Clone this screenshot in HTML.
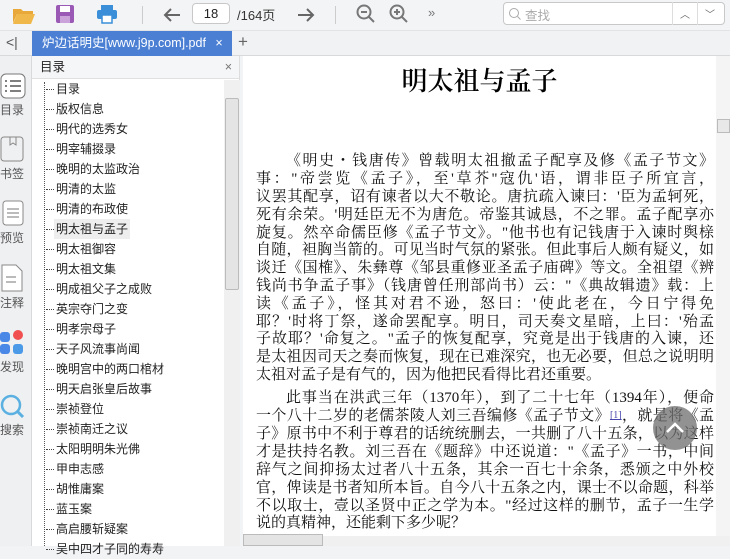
<!DOCTYPE html><html><head><meta charset="utf-8"><style>
*{margin:0;padding:0;box-sizing:border-box}
body{width:730px;height:546px;overflow:hidden;background:#f2f3f5;font-family:"Liberation Sans","Noto Sans CJK SC",sans-serif;position:relative;font-size:12px;color:#222}
.abs{position:absolute}
.tb{left:0;top:0;width:730px;height:31px;background:#f3f4f6;border-bottom:1px solid #e2e3e5}
.tabbar{left:0;top:31px;width:730px;height:25px;background:#f1f2f4;border-bottom:1px solid #d8d9db}
.tab{left:32px;top:31px;width:200px;height:25px;background:#4a7fd4;color:#fff;font-size:12.5px;line-height:25px;padding-left:10px}
.side{left:0;top:56px;width:32px;height:490px;background:#eff0f2;border-right:1px solid #d8d9db}
.side .lb{position:absolute;left:0;width:32px;font-size:12px;color:#555;text-align:center}
.toc{left:32px;top:56px;width:208px;height:490px;background:#fff;border-right:1px solid #ddd}
.toch{height:23px;border-bottom:1px solid #e0e0e0;background:#f5f6f7;padding-left:8px;line-height:22px;font-size:12.5px}
.item{position:absolute;left:24px;font-size:12px;line-height:20px;height:20px;padding-left:0}
.item:before{content:"";position:absolute;left:-10px;top:10px;width:8px;border-top:1px dotted #444}
.doc{left:243px;top:56px;width:473px;height:480px;background:#fff}
.ln{position:absolute;left:13px;width:458px;font-family:"Liberation Serif","Noto Serif CJK SC",serif;font-size:15px;line-height:18px;height:18px;text-align:justify;text-align-last:justify;white-space:nowrap;color:#111}
.ln.l{text-align-last:left}
.ln.i{left:43px;width:428px}
</style></head><body>
<div class="abs tb"></div>
<svg class="abs" style="left:12px;top:5px" width="24" height="20"><path d="M1 4h8l2 2h10v3H5L1 18z" fill="#e9a93a"/><path d="M5 9h18l-4 10H1z" fill="#f0b84a"/></svg>
<svg class="abs" style="left:55px;top:4px" width="20" height="20"><rect x="1" y="1" width="18" height="18" rx="2" fill="#9b59b6"/><rect x="5" y="2" width="10" height="6" fill="#fff"/><rect x="5" y="12" width="10" height="7" fill="#c9a3d9"/></svg>
<svg class="abs" style="left:96px;top:4px" width="22" height="20"><rect x="5" y="1" width="12" height="5" fill="#3a8fd8"/><rect x="1" y="6" width="20" height="9" rx="2" fill="#3a8fd8"/><rect x="6" y="11" width="10" height="8" fill="#fff" stroke="#3a8fd8" stroke-width="1.5"/></svg>
<div class="abs" style="left:142px;top:6px;width:1px;height:18px;background:#ccc"></div>
<svg class="abs" style="left:162px;top:5px" width="20" height="20"><path d="M18 10H3M9 4l-6 6 6 6" stroke="#666" stroke-width="2" fill="none"/></svg>
<div class="abs" style="left:192px;top:3px;width:38px;height:21px;border:1px solid #c8c8c8;border-radius:4px;background:#fff;text-align:center;line-height:19px;font-size:13px">18</div>
<div class="abs" style="left:237px;top:5px;font-size:13px;color:#333">/164页</div>
<svg class="abs" style="left:296px;top:5px" width="20" height="20"><path d="M2 10h15M11 4l6 6-6 6" stroke="#666" stroke-width="2" fill="none"/></svg>
<div class="abs" style="left:335px;top:6px;width:1px;height:18px;background:#ccc"></div>
<svg class="abs" style="left:356px;top:4px" width="20" height="20"><circle cx="8" cy="8" r="6.5" stroke="#777" stroke-width="2" fill="none"/><path d="M5 8h6M13 13l5 5" stroke="#777" stroke-width="2"/></svg>
<svg class="abs" style="left:389px;top:4px" width="20" height="20"><circle cx="8" cy="8" r="6.5" stroke="#777" stroke-width="2" fill="none"/><path d="M5 8h6M8 5v6M13 13l5 5" stroke="#777" stroke-width="2"/></svg>
<div class="abs" style="left:428px;top:5px;color:#777;font-size:13px">»</div>
<div class="abs" style="left:503px;top:2px;width:222px;height:23px;border:1px solid #c8c8c8;border-radius:4px;background:#fff"></div>
<svg class="abs" style="left:508px;top:7px" width="14" height="14"><circle cx="6" cy="6" r="4.5" stroke="#aaa" fill="none"/><path d="M9.5 9.5l3 3" stroke="#aaa"/></svg>
<div class="abs" style="left:525px;top:5px;color:#aaa;font-size:12.5px">查找</div>
<div class="abs" style="left:672px;top:2px;width:1px;height:23px;background:#ddd"></div>
<div class="abs" style="left:697px;top:2px;width:1px;height:23px;background:#ddd"></div>
<div class="abs" style="left:680px;top:6px;color:#666;font-size:10px">︿</div>
<div class="abs" style="left:705px;top:6px;color:#666;font-size:10px">﹀</div>
<div class="abs tabbar"></div>
<div class="abs" style="left:6px;top:34px;color:#555;font-size:14px">&lt;|</div>
<div class="abs tab">炉边话明史[www.j9p.com].pdf <span style="margin-left:6px">×</span></div>
<div class="abs" style="left:238px;top:32px;color:#666;font-size:17px">+</div>
<div class="abs side">
<svg class="abs" style="left:0;top:17px" width="26" height="26"><rect x="1" y="1" width="24" height="24" rx="5" fill="#fff" stroke="#777"/><path d="M5 8h2M10 8h11M5 13h2M10 13h11M5 18h2M10 18h11" stroke="#555" stroke-width="1.6"/></svg>
<div class="lb" style="top:45px;text-align:left">目录</div>
<svg class="abs" style="left:0;top:80px" width="24" height="26"><rect x="1" y="1" width="22" height="24" rx="3" fill="none" stroke="#888"/><path d="M10 1v8l3-2 3 2V1" stroke="#888" fill="none"/></svg>
<div class="lb" style="top:109px;text-align:left">书签</div>
<svg class="abs" style="left:0;top:144px" width="24" height="26"><rect x="3" y="1" width="20" height="24" rx="3" fill="#fff" stroke="#888"/><path d="M7 9h12M7 13h12M7 17h12" stroke="#777"/></svg>
<div class="lb" style="top:173px;text-align:left">预览</div>
<svg class="abs" style="left:0;top:208px" width="24" height="28"><path d="M2 1h14l6 6v20H2z" fill="#fff" stroke="#888"/><path d="M6 13h10M6 18h10" stroke="#777"/></svg>
<div class="lb" style="top:238px;text-align:left">注释</div>
<div class="abs" style="left:0;top:276px;width:10px;height:10px;border-radius:3px;background:#4a88e8"></div>
<div class="abs" style="left:13px;top:274px;width:10px;height:10px;border-radius:50%;background:#f05050"></div>
<div class="abs" style="left:0;top:288px;width:10px;height:10px;border-radius:3px;background:#4a88e8"></div>
<div class="abs" style="left:13px;top:288px;width:10px;height:10px;border-radius:3px;background:#4a9ae8"></div>
<div class="lb" style="top:302px;text-align:left">发现</div>
<svg class="abs" style="left:0;top:338px" width="26" height="26"><circle cx="11" cy="11" r="9" stroke="#5ab0e0" stroke-width="2.5" fill="none"/><path d="M17 17l6 6" stroke="#5ab0e0" stroke-width="3"/></svg>
<div class="lb" style="top:365px;text-align:left">搜索</div>
</div>
<div class="abs toc"><div class="toch">目录<span style="position:absolute;right:7px;color:#777">×</span></div>
<div class="abs" style="left:12px;top:26px;height:464px;border-left:1px dotted #555"></div>
<div class="abs" style="left:22px;top:163px;width:76px;height:20px;background:#eee"></div>
<div class="item" style="top:23px">目录</div><div class="item" style="top:43px">版权信息</div><div class="item" style="top:63px">明代的选秀女</div><div class="item" style="top:83px">明宰辅掇录</div><div class="item" style="top:103px">晚明的太监政治</div><div class="item" style="top:123px">明清的太监</div><div class="item" style="top:143px">明清的布政使</div><div class="item" style="top:163px">明太祖与孟子</div><div class="item" style="top:183px">明太祖御容</div><div class="item" style="top:203px">明太祖文集</div><div class="item" style="top:223px">明成祖父子之成败</div><div class="item" style="top:243px">英宗夺门之变</div><div class="item" style="top:263px">明孝宗母子</div><div class="item" style="top:283px">天子风流事尚闻</div><div class="item" style="top:303px">晚明宫中的两口棺材</div><div class="item" style="top:323px">明天启张皇后故事</div><div class="item" style="top:343px">崇祯登位</div><div class="item" style="top:363px">崇祯南迁之议</div><div class="item" style="top:383px">太阳明明朱光佛</div><div class="item" style="top:403px">甲申志感</div><div class="item" style="top:423px">胡惟庸案</div><div class="item" style="top:443px">蓝玉案</div><div class="item" style="top:463px">高启腰斩疑案</div><div class="item" style="top:483px">吴中四才子同的寿寿</div>
<div class="abs" style="left:192px;top:24px;width:16px;height:466px;background:#f0f0f0"></div>
<div class="abs" style="left:193px;top:42px;width:14px;height:192px;background:#e4e4e4;border:1px solid #bbb;border-radius:2px"></div>
</div>
<div class="abs doc">
<div class="abs" style="left:0;top:5px;width:473px;text-align:center;font-family:'Liberation Serif','Noto Serif CJK SC',serif;font-size:26px;font-weight:600;color:#000">明太祖与孟子</div>
<div class="ln i" style="top:96px">《明史・钱唐传》曾载明太祖撤孟子配享及修《孟子节文》</div>
<div class="ln" style="top:114px">事："帝尝览《孟子》，至'草芥''寇仇'语，谓非臣子所宜言，</div>
<div class="ln" style="top:132px">议罢其配享，诏有谏者以大不敬论。唐抗疏入谏曰：'臣为孟轲死，</div>
<div class="ln" style="top:150px">死有余荣。'明廷臣无不为唐危。帝鉴其诚恳，不之罪。孟子配享亦</div>
<div class="ln" style="top:168px">旋复。然卒命儒臣修《孟子节文》。"他书也有记钱唐于入谏时舆榇</div>
<div class="ln" style="top:185px">自随，袒胸当箭的。可见当时气氛的紧张。但此事后人颇有疑义，如</div>
<div class="ln" style="top:203px">谈迁《国榷》、朱彝尊《邹县重修亚圣孟子庙碑》等文。全祖望《辨</div>
<div class="ln" style="top:221px">钱尚书争孟子事》（钱唐曾任刑部尚书）云："《典故辑遗》载：上</div>
<div class="ln" style="top:239px">读《孟子》，怪其对君不逊，怒曰：'使此老在，今日宁得免</div>
<div class="ln" style="top:257px">耶？'时将丁祭，遂命罢配享。明日，司天奏文星暗，上曰：'殆孟</div>
<div class="ln" style="top:274px">子故耶？'命复之。"孟子的恢复配享，究竟是出于钱唐的入谏，还</div>
<div class="ln" style="top:292px">是太祖因司天之奏而恢复，现在已难深究，也无必要，但总之说明明</div>
<div class="ln l" style="top:310px">太祖对孟子是有气的，因为他把民看得比君还重要。</div>
<div class="ln i" style="top:333px">此事当在洪武三年（1370年），到了二十七年（1394年），便命</div>
<div class="ln" style="top:351px">一个八十二岁的老儒茶陵人刘三吾编修《孟子节文》<span style="color:#44a;font-size:10px;text-decoration:underline;vertical-align:top">[1]</span>，就是将《孟</div>
<div class="ln" style="top:369px">子》原书中不利于尊君的话统统删去，一共删了八十五条，以为这样</div>
<div class="ln" style="top:387px">才是扶持名教。刘三吾在《题辞》中还说道："《孟子》一书，中间</div>
<div class="ln" style="top:405px">辞气之间抑扬太过者八十五条，其余一百七十余条，悉颁之中外校</div>
<div class="ln" style="top:423px">官，俾读是书者知所本旨。自今八十五条之内，课士不以命题，科举</div>
<div class="ln" style="top:441px">不以取士，壹以圣贤中正之学为本。"经过这样的删节，孟子一生学</div>
<div class="ln l" style="top:458px">说的真精神，还能剩下多少呢？</div>
</div>
<div class="abs" style="left:653px;top:406px;width:44px;height:44px;border-radius:50%;background:rgba(110,110,110,.75)"></div>
<svg class="abs" style="left:663px;top:416px" width="24" height="24"><path d="M4 16l8-8 8 8" stroke="#fff" stroke-width="2.5" fill="none"/></svg>
<div class="abs" style="left:716px;top:56px;width:14px;height:480px;background:#f4f4f4"></div>
<div class="abs" style="left:717px;top:119px;width:13px;height:14px;background:#e8e8e8;border:1px solid #bbb"></div>
<div class="abs" style="left:243px;top:536px;width:487px;height:10px;background:#f0f0f0"></div>
<div class="abs" style="left:243px;top:534px;width:80px;height:12px;background:#e4e4e4;border:1px solid #bbb"></div>
</body></html>
